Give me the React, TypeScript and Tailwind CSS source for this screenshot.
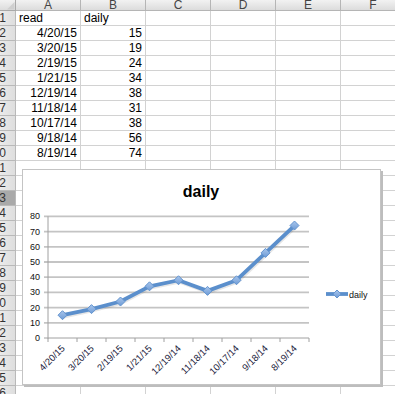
import React from "react";

const COLS = ["A", "B", "C", "D", "E", "F"];
const DATA: [string, number][] = [
  ["4/20/15", 15],
  ["3/20/15", 19],
  ["2/19/15", 24],
  ["1/21/15", 34],
  ["12/19/14", 38],
  ["11/18/14", 31],
  ["10/17/14", 38],
  ["9/18/14", 56],
  ["8/19/14", 74],
];

const font = { fontFamily: '"Liberation Sans", Arial, sans-serif' };

function Row({ n }: { n: number }) {
  const selected = n === 13;
  let a: React.ReactNode = null;
  let b: React.ReactNode = null;
  let align = "text-right";
  if (n === 1) {
    a = "read";
    b = "daily";
    align = "text-left";
  } else if (n >= 2 && n <= 10) {
    a = DATA[n - 2][0];
    b = DATA[n - 2][1];
  }
  return (
    <div className="flex h-[15px] shrink-0">
      <div
        className={`w-[16px] shrink-0 h-[15px] overflow-hidden border-b border-r border-[#b9b9b9] flex justify-end pr-[9px] text-[12px] leading-[14px] text-[#333] ${
          selected ? "bg-[#a9a9a9]" : "bg-gradient-to-r from-[#ebebeb] to-[#dedede]"
        }`}
      >
        <span className="whitespace-nowrap shrink-0">{n}</span>
      </div>
      {COLS.map((c, i) => (
        <div
          key={c}
          className={`w-[65px] shrink-0 h-[15px] border-b border-r border-[#d2d2d2] text-[12px] leading-[14px] text-black px-[3px] whitespace-nowrap overflow-hidden ${align}`}
        >
          {i === 0 ? a : i === 1 ? b : null}
        </div>
      ))}
    </div>
  );
}

function Chart() {
  const y0 = 338;
  const unit = 1.52;
  const x0 = 48;
  const cw = 29;
  const px = (i: number) => x0 + cw / 2 + cw * i;
  const py = (v: number) => y0 - v * unit;
  const pts = DATA.map(([, v], i) => `${px(i)},${py(v)}`).join(" ");
  const diamond = (x: number, y: number, r = 4.5) =>
    `M${x},${y - r} L${x + r},${y} L${x},${y + r} L${x - r},${y} Z`;
  return (
    <div className="absolute left-[22px] top-[169px] w-[359px] h-[216px] bg-white border border-[#c4c4c4] shadow-[2px_2px_0_#bdbdbd] overflow-hidden">
      <svg width="357" height="214" className="block">
        <defs>
          <linearGradient id="mk" x1="0" y1="0" x2="0" y2="1">
            <stop offset="0" stopColor="#a9c6ec" />
            <stop offset="1" stopColor="#6d9bd6" />
          </linearGradient>
        </defs>
        <g transform="translate(-23,-170)" style={font}>
          <text x="201" y="197" textAnchor="middle" fontSize="16" fontWeight="bold" fill="#000">
            daily
          </text>
          {Array.from({ length: 8 }, (_, k) => (
            <line
              key={k}
              x1={44}
              x2={309}
              y1={py((k + 1) * 10)}
              y2={py((k + 1) * 10)}
              stroke="#c4c4c4"
              strokeWidth={1.8}
            />
          ))}
          {Array.from({ length: 9 }, (_, k) => (
            <text key={k} x={40} y={py(k * 10) + 3} textAnchor="end" fontSize="9" fill="#111">
              {k * 10}
            </text>
          ))}
          <line x1={48} x2={48} y1={py(80)} y2={y0 + 0.5} stroke="#a0a0a0" strokeWidth={1} />
          <line x1={44} x2={309} y1={y0} y2={y0} stroke="#a0a0a0" strokeWidth={1} />
          {Array.from({ length: 10 }, (_, k) => (
            <line key={k} x1={x0 + cw * k} x2={x0 + cw * k} y1={y0} y2={y0 + 4} stroke="#a0a0a0" strokeWidth={1} />
          ))}
          {DATA.map(([d], i) => (
            <text
              key={d}
              x={px(i) + 3}
              y={y0 + 11}
              textAnchor="end"
              fontSize="9.5"
              fill="#1a1a3a"
              transform={`rotate(-45 ${px(i) + 3} ${y0 + 11})`}
            >
              {d}
            </text>
          ))}
          <g transform="translate(1,1.5)" opacity="0.12">
            <polyline points={pts} fill="none" stroke="#333" strokeWidth={3.5} strokeLinejoin="round" />
          </g>
          <polyline points={pts} fill="none" stroke="#5b8fcc" strokeWidth={3.8} strokeLinejoin="round" />
          {DATA.map(([d, v], i) => (
            <path key={d} d={diamond(px(i), py(v))} fill="url(#mk)" stroke="#6394cf" strokeWidth={1} />
          ))}
          <line x1={326} x2={348} y1={294} y2={294} stroke="#5b8fcc" strokeWidth={3.8} />
          <path d={diamond(337, 294, 4)} fill="url(#mk)" stroke="#6394cf" strokeWidth={1} />
          <text x={349} y={297.5} fontSize="9" fill="#111">
            daily
          </text>
        </g>
      </svg>
    </div>
  );
}

export default function App() {
  return (
    <div className="relative w-[395px] h-[394px] overflow-hidden bg-white" style={font}>
      <div className="flex flex-col">
        <div className="flex h-[11px] shrink-0">
          <div className="relative w-[16px] shrink-0 h-[11px] border-b border-r border-[#a9a9a9] bg-gradient-to-b from-[#f2f2f2] to-[#dcdcdc]">
            <svg width="16" height="11" className="absolute left-0 top-0">
              <path d="M14.5,2 L14.5,9.5 L7,9.5 Z" fill="#cfcfcf" />
            </svg>
          </div>
          {COLS.map((c) => (
            <div
              key={c}
              className="w-[65px] shrink-0 h-[11px] border-b border-r border-[#b5b5b5] bg-gradient-to-b from-[#f2f2f2] to-[#dcdcdc] text-center text-[12px] leading-[10px] text-[#444] overflow-hidden"
            >
              {c}
            </div>
          ))}
        </div>
        {Array.from({ length: 26 }, (_, i) => (
          <Row key={i} n={i + 1} />
        ))}
      </div>
      <Chart />
    </div>
  );
}
